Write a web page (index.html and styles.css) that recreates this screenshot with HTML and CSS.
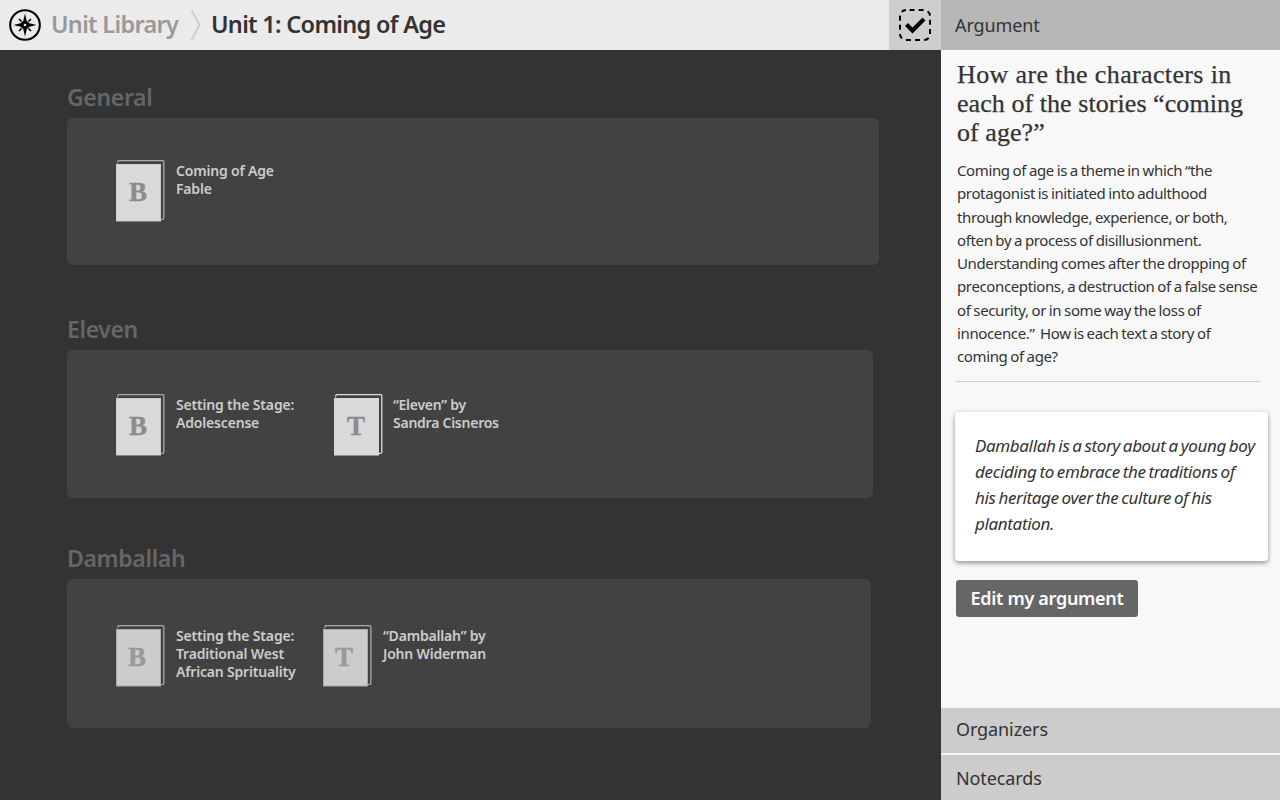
FILE: index.html
```html
<!DOCTYPE html>
<html lang="en">
<head>
<meta charset="utf-8">
<title>Unit 1: Coming of Age</title>
<link rel="stylesheet" href="styles.css">
</head>
<body>
<svg width="0" height="0" class="defs" aria-hidden="true">
  <symbol id="sheets" viewBox="0 0 50 62">
    <rect x="1.8" y="0.7" width="46" height="58.6" rx="1" fill="none" stroke="currentColor" stroke-width="1.3"/>
    <path d="M1.5 3.2H45.2V59" fill="none" stroke="#424242" stroke-width="1.4"/>
    <rect x="0.5" y="4.5" width="44" height="56.5" class="paper" stroke-width="1"/>
  </symbol>
</svg>
<div class="app">
  <main class="main">
    <header class="topbar">
      <svg class="compass" width="32" height="32" viewBox="0 0 32 32">
        <circle cx="16" cy="16" r="14.8" fill="none" stroke="#000" stroke-width="2.1"/>
        <path d="M16 4.5l1.9 7.9 1.7 0 3-3-3 3v1.7L27.5 16l-7.9 1.9v1.7l3 3-3-3h-1.7L16 27.5l-1.9-7.9h-1.7l-3 3 3-3v-1.7L4.5 16l7.9-1.9v-1.7l-3-3 3 3h1.7z" fill="#000"/>
        <path d="M10 10l2.4 2.4M22 10l-2.4 2.4M10 22l2.4-2.4M22 22l-2.4-2.4" stroke="#000" stroke-width="1.6"/>
        <circle cx="16" cy="16" r="1.3" fill="#ebebeb"/>
      </svg>
      <span class="crumb">Unit Library</span>
      <svg class="chevron" width="12" height="32" viewBox="0 0 12 32"><path d="M1.5 1L9.5 16 1.5 31" fill="none" stroke="#ccc" stroke-width="1.8"/></svg>
      <h1 class="title">Unit 1: Coming of Age</h1>
      <div class="toggle">
        <svg width="34" height="34" viewBox="0 0 34 34">
          <rect x="2" y="2" width="30" height="30" rx="6" fill="none" stroke="#000" stroke-width="2" stroke-dasharray="5 4.14" stroke-dashoffset="-3.5"/>
          <path d="M8.5 16.5l6 6L26 11" fill="none" stroke="#000" stroke-width="4.2"/>
        </svg>
      </div>
    </header>

    <section class="group general">
      <h2 class="group-title">General</h2>
      <div class="shelf">
        <div class="item">
          <div class="doc"><svg width="50" height="62"><use href="#sheets"/></svg><span class="letter">B</span></div>
          <p class="label">Coming of Age<br>Fable</p>
        </div>
      </div>
    </section>

    <section class="group eleven">
      <h2 class="group-title">Eleven</h2>
      <div class="shelf">
        <div class="item first">
          <div class="doc"><svg width="50" height="62"><use href="#sheets"/></svg><span class="letter">B</span></div>
          <p class="label">Setting the Stage:<br>Adolescense</p>
        </div>
        <div class="item crisp">
          <div class="doc"><svg width="50" height="62"><use href="#sheets"/></svg><span class="letter">T</span></div>
          <p class="label">“Eleven” by<br>Sandra Cisneros</p>
        </div>
      </div>
    </section>

    <section class="group damballah">
      <h2 class="group-title">Damballah</h2>
      <div class="shelf">
        <div class="item first">
          <div class="doc"><svg width="50" height="62"><use href="#sheets"/></svg><span class="letter">B</span></div>
          <p class="label">Setting the Stage:<br>Traditional West<br>African Sprituality</p>
        </div>
        <div class="item">
          <div class="doc"><svg width="50" height="62"><use href="#sheets"/></svg><span class="letter">T</span></div>
          <p class="label">“Damballah” by<br>John Widerman</p>
        </div>
      </div>
    </section>
  </main>

  <aside class="side">
    <div class="tab active">Argument</div>
    <div class="panel">
      <h2 class="question">How are the characters in<br><span class="tight">each of the stories “coming<br>of age?”</span></h2>
      <p class="prompt">Coming of age is a theme in which “the<br>protagonist is initiated into adulthood<br>through knowledge, experience, or both,<br>often by a process of disillusionment.<br>Understanding comes after the dropping of<br>preconceptions, a destruction of a false sense<br>of security, or in some way the loss of<br>innocence.” &nbsp;How is each text a story of<br>coming of age?</p>
      <div class="answer">Damballah is a story about a young boy<br>deciding to embrace the traditions of<br>his heritage over the culture of his<br>plantation.</div>
      <button class="edit">Edit my argument</button>
    </div>
    <div class="tab organizers">Organizers</div>
    <div class="tab notecards">Notecards</div>
  </aside>
</div>
</body>
</html>
```
FILE: styles.css
```css
* { box-sizing: border-box; }
body { margin: 0; font-family: "Noto Sans", "Open Sans", sans-serif; color: #333; }
h1, h2, p { margin: 0; }
.defs { position: absolute; }
.app { display: flex; width: 1280px; height: 800px; overflow: hidden; white-space: nowrap; }
.main { width: 941px; background: #333; }

.topbar { display: flex; align-items: center; height: 50px; background: #ebebeb; padding-left: 9px; }
.compass { flex: none; }
.crumb, .title { font-size: 23.5px; font-weight: 600; line-height: 32px; padding-bottom: 3px; letter-spacing: -0.7px; }
.crumb { width: 139px; padding-left: 10px; color: #999; }
.chevron { margin-left: 10px; }
.title { margin-left: 9px; }
.toggle { display: flex; align-items: center; justify-content: center; width: 52px; height: 50px; margin-left: auto; background: #cecece; }

.group { padding-left: 67px; }
.general { padding-top: 30px; }
.eleven { padding-top: 47px; }
.damballah { padding-top: 43px; }
.group-title { height: 38px; font-size: 23px; font-weight: 600; line-height: 35px; color: #666; letter-spacing: -0.35px; }
.shelf { display: flex; border-radius: 6px; background: #424242; padding-left: 49px; }
.general .shelf { width: 812px; height: 147px; padding-top: 42px; }
.eleven .shelf { width: 806px; height: 148px; padding-top: 44px; }
.damballah .shelf { width: 804px; height: 149px; padding-top: 46px; }
.item { display: flex; }
.eleven .first { width: 218px; }
.damballah .first { width: 207px; }
.doc { --paper: #d9d9d9; --edge: #ccc; position: relative; width: 50px; height: 62px; color: #aaa; }
.doc svg { display: block; }
.paper { fill: var(--paper); stroke: var(--edge); }
.crisp .doc { --edge: #d9d9d9; color: #ddd; }
.letter { position: absolute; left: 0; top: 4px; width: 44px; text-align: center; font: bold 27px/56px "Liberation Serif", serif; color: #8c8c8c; -webkit-text-stroke: 0.4px #8c8c8c; }
.damballah .doc { --paper: #ccc; --edge: #aaa; }
.damballah .letter { left: -1px; color: #999; -webkit-text-stroke-color: #999; }
.label { margin: 2px 0 0 10px; font-size: 14px; font-weight: 600; line-height: 18px; color: #ccc; letter-spacing: -0.18px; }
.crisp .label { margin-left: 9px; letter-spacing: -0.25px; }

.side { display: flex; flex-direction: column; width: 339px; background: #f8f8f8; }
.tab { height: 45px; padding-left: 15px; font-size: 18px; line-height: 43px; background: #ccc; letter-spacing: -0.1px; }
.tab.active { height: 50px; padding-left: 14px; line-height: 51px; background: #b7b7b7; }
.organizers { margin-bottom: 2px; }
.notecards { line-height: 46px; }
.panel { flex: 1; padding: 10px 11px 0 16px; }
.question { font: 400 26px/29px "Liberation Serif", serif; letter-spacing: 0.36px; -webkit-text-stroke: 0.25px #333; }
.tight { letter-spacing: 0.06px; }
.prompt { width: 304px; height: 223px; margin: 12px 0 0 -1px; padding-left: 1px; border-bottom: 1px solid #ccc; font-size: 15px; line-height: 23.25px; letter-spacing: -0.37px; word-spacing: -0.7px; }
.answer { width: 313px; height: 149px; margin: 30px 0 0 -2px; padding: 21px 0 0 20px; border-radius: 4px; background: #fff; box-shadow: 0 2px 5px rgba(0, 0, 0, 0.42); font-size: 17px; font-style: italic; line-height: 26px; letter-spacing: -0.35px; word-spacing: -1.2px; }
.edit { display: block; width: 182px; height: 37px; margin: 19px 0 0 -1px; padding: 0; border: 0; border-radius: 3px; background: #666; color: #fff; font: 600 18px/37px "Noto Sans", sans-serif; letter-spacing: -0.3px; }
```
